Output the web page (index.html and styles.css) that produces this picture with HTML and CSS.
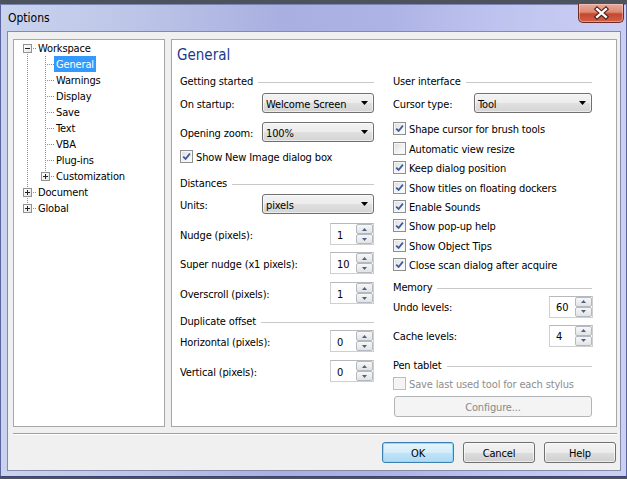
FILE: index.html
```html
<!DOCTYPE html>
<html>
<head>
<meta charset="utf-8">
<title>Options</title>
<link rel="stylesheet" href="styles.css">
</head>
<body>
<div class="window">
  <div class="titlebar">
    <span class="title">Options</span>
    <div class="close">
      <svg width="46" height="19" viewBox="0 0 46 19">
        <path d="M19.5 5 L28.5 13 M28.5 5 L19.5 13" stroke="#4a1a10" stroke-width="4.6" stroke-linecap="square" fill="none"/>
        <path d="M19.5 5 L28.5 13 M28.5 5 L19.5 13" stroke="#ffffff" stroke-width="2.4" stroke-linecap="square" fill="none"/>
      </svg>
    </div>
  </div>
  <div class="client">
    <div class="panes">
      <div class="tree">
        <div class="trow"><span class="c c-bottom-h"><i class="tbox"></i></span><span class="lbl">Workspace</span></div>
        <div class="trow"><span class="c c-full"></span><span class="c c-full-h"></span><span class="lbl sel">General</span></div>
        <div class="trow"><span class="c c-full"></span><span class="c c-full-h"></span><span class="lbl">Warnings</span></div>
        <div class="trow"><span class="c c-full"></span><span class="c c-full-h"></span><span class="lbl">Display</span></div>
        <div class="trow"><span class="c c-full"></span><span class="c c-full-h"></span><span class="lbl">Save</span></div>
        <div class="trow"><span class="c c-full"></span><span class="c c-full-h"></span><span class="lbl">Text</span></div>
        <div class="trow"><span class="c c-full"></span><span class="c c-full-h"></span><span class="lbl">VBA</span></div>
        <div class="trow"><span class="c c-full"></span><span class="c c-full-h"></span><span class="lbl">Plug-ins</span></div>
        <div class="trow"><span class="c c-full"></span><span class="c c-top-h"><i class="tbox plus"></i></span><span class="lbl">Customization</span></div>
        <div class="trow"><span class="c c-full-h"><i class="tbox plus"></i></span><span class="lbl">Document</span></div>
        <div class="trow"><span class="c c-top-h"><i class="tbox plus"></i></span><span class="lbl">Global</span></div>
      </div>
      <div class="page">
        <div class="heading">General</div>
        <div class="cols">
          <div class="col col-left">
            <div class="gtitle">Getting started</div>
            <div class="frow h20 mt5"><span class="t">On startup:</span><div class="combo cw-l"><span class="t">Welcome Screen</span><svg class="dd" width="7" height="4" viewBox="0 0 7 4"><path d="M0 0H7L3.5 4Z" fill="#000"/></svg></div></div>
            <div class="frow h20 mt9"><span class="t">Opening zoom:</span><div class="combo cw-l"><span class="t">100%</span><svg class="dd" width="7" height="4" viewBox="0 0 7 4"><path d="M0 0H7L3.5 4Z" fill="#000"/></svg></div></div>
            <label class="chk h16 mt6"><span class="cbox"><svg width="9" height="9" viewBox="0 0 9 9"><path d="M1.2 4.6 L3.6 7 L7.9 1.6" stroke="#3f5b96" stroke-width="1.8" fill="none"/></svg></span><span class="t">Show New Image dialog box</span></label>

            <div class="gtitle mt12">Distances</div>
            <div class="frow h20 mt4"><span class="t">Units:</span><div class="combo cw-l"><span class="t">pixels</span><svg class="dd" width="7" height="4" viewBox="0 0 7 4"><path d="M0 0H7L3.5 4Z" fill="#000"/></svg></div></div>
            <div class="frow h22 mt9"><span class="t">Nudge (pixels):</span><div class="spin"><span class="val">1</span><div class="arrows"><div class="sb"><svg width="5" height="3" viewBox="0 0 5 3"><path d="M0 3L2.5 0L5 3Z" fill="#4d6185"/></svg></div><div class="sb"><svg width="5" height="3" viewBox="0 0 5 3"><path d="M0 0L2.5 3L5 0Z" fill="#4d6185"/></svg></div></div></div></div>
            <div class="frow h22 mt7"><span class="t">Super nudge (x1 pixels):</span><div class="spin"><span class="val">10</span><div class="arrows"><div class="sb"><svg width="5" height="3" viewBox="0 0 5 3"><path d="M0 3L2.5 0L5 3Z" fill="#4d6185"/></svg></div><div class="sb"><svg width="5" height="3" viewBox="0 0 5 3"><path d="M0 0L2.5 3L5 0Z" fill="#4d6185"/></svg></div></div></div></div>
            <div class="frow h22 mt8"><span class="t">Overscroll (pixels):</span><div class="spin"><span class="val">1</span><div class="arrows"><div class="sb"><svg width="5" height="3" viewBox="0 0 5 3"><path d="M0 3L2.5 0L5 3Z" fill="#4d6185"/></svg></div><div class="sb"><svg width="5" height="3" viewBox="0 0 5 3"><path d="M0 0L2.5 3L5 0Z" fill="#4d6185"/></svg></div></div></div></div>

            <div class="gtitle mt10">Duplicate offset</div>
            <div class="frow h22 mt2"><span class="t">Horizontal (pixels):</span><div class="spin"><span class="val">0</span><div class="arrows"><div class="sb"><svg width="5" height="3" viewBox="0 0 5 3"><path d="M0 3L2.5 0L5 3Z" fill="#4d6185"/></svg></div><div class="sb"><svg width="5" height="3" viewBox="0 0 5 3"><path d="M0 0L2.5 3L5 0Z" fill="#4d6185"/></svg></div></div></div></div>
            <div class="frow h22 mt8"><span class="t">Vertical (pixels):</span><div class="spin"><span class="val">0</span><div class="arrows"><div class="sb"><svg width="5" height="3" viewBox="0 0 5 3"><path d="M0 3L2.5 0L5 3Z" fill="#4d6185"/></svg></div><div class="sb"><svg width="5" height="3" viewBox="0 0 5 3"><path d="M0 0L2.5 3L5 0Z" fill="#4d6185"/></svg></div></div></div></div>
          </div>

          <div class="col col-right">
            <div class="gtitle">User interface</div>
            <div class="frow h20 mt5"><span class="t">Cursor type:</span><div class="combo cw-r"><span class="t">Tool</span><svg class="dd" width="7" height="4" viewBox="0 0 7 4"><path d="M0 0H7L3.5 4Z" fill="#000"/></svg></div></div>
            <div class="chklist">
              <label class="chk"><span class="cbox"><svg width="9" height="9" viewBox="0 0 9 9"><path d="M1.2 4.6 L3.6 7 L7.9 1.6" stroke="#3f5b96" stroke-width="1.8" fill="none"/></svg></span><span class="t">Shape cursor for brush tools</span></label>
              <label class="chk"><span class="cbox"></span><span class="t">Automatic view resize</span></label>
              <label class="chk"><span class="cbox"><svg width="9" height="9" viewBox="0 0 9 9"><path d="M1.2 4.6 L3.6 7 L7.9 1.6" stroke="#3f5b96" stroke-width="1.8" fill="none"/></svg></span><span class="t">Keep dialog position</span></label>
              <label class="chk"><span class="cbox"><svg width="9" height="9" viewBox="0 0 9 9"><path d="M1.2 4.6 L3.6 7 L7.9 1.6" stroke="#3f5b96" stroke-width="1.8" fill="none"/></svg></span><span class="t">Show titles on floating dockers</span></label>
              <label class="chk"><span class="cbox"><svg width="9" height="9" viewBox="0 0 9 9"><path d="M1.2 4.6 L3.6 7 L7.9 1.6" stroke="#3f5b96" stroke-width="1.8" fill="none"/></svg></span><span class="t">Enable Sounds</span></label>
              <label class="chk"><span class="cbox"><svg width="9" height="9" viewBox="0 0 9 9"><path d="M1.2 4.6 L3.6 7 L7.9 1.6" stroke="#3f5b96" stroke-width="1.8" fill="none"/></svg></span><span class="t">Show pop-up help</span></label>
              <label class="chk"><span class="cbox"><svg width="9" height="9" viewBox="0 0 9 9"><path d="M1.2 4.6 L3.6 7 L7.9 1.6" stroke="#3f5b96" stroke-width="1.8" fill="none"/></svg></span><span class="t">Show Object Tips</span></label>
              <label class="chk"><span class="cbox"><svg width="9" height="9" viewBox="0 0 9 9"><path d="M1.2 4.6 L3.6 7 L7.9 1.6" stroke="#3f5b96" stroke-width="1.8" fill="none"/></svg></span><span class="t">Close scan dialog after acquire</span></label>
            </div>

            <div class="gtitle mt6">Memory</div>
            <div class="frow h22 mt1"><span class="t">Undo levels:</span><div class="spin"><span class="val">60</span><div class="arrows"><div class="sb"><svg width="5" height="3" viewBox="0 0 5 3"><path d="M0 3L2.5 0L5 3Z" fill="#4d6185"/></svg></div><div class="sb"><svg width="5" height="3" viewBox="0 0 5 3"><path d="M0 0L2.5 3L5 0Z" fill="#4d6185"/></svg></div></div></div></div>
            <div class="frow h22 mt7"><span class="t">Cache levels:</span><div class="spin"><span class="val">4</span><div class="arrows"><div class="sb"><svg width="5" height="3" viewBox="0 0 5 3"><path d="M0 3L2.5 0L5 3Z" fill="#4d6185"/></svg></div><div class="sb"><svg width="5" height="3" viewBox="0 0 5 3"><path d="M0 0L2.5 3L5 0Z" fill="#4d6185"/></svg></div></div></div></div>

            <div class="gtitle mt11">Pen tablet</div>
            <label class="chk h16 mt4 disabled"><span class="cbox"></span><span class="t">Save last used tool for each stylus</span></label>
            <div class="btn-config">Configure...</div>
          </div>
        </div>
      </div>
    </div>
    <div class="sep"></div>
    <div class="buttons">
      <div class="btn btn-default">OK</div>
      <div class="btn">Cancel</div>
      <div class="btn">Help</div>
    </div>
  </div>
</div>
</body>
</html>
```

FILE: styles.css
```css
html, body {
  margin: 0;
  padding: 0;
}
body {
  width: 627px;
  height: 479px;
  overflow: hidden;
  background: #4d535c;
  font-family: "DejaVu Sans Condensed", "DejaVu Sans", sans-serif;
  font-size: 11px;
  letter-spacing: -0.15px;
  color: #000;
}

/* window frame */
.window {
  margin-top: 4px;
  width: 627px;
  height: 473px;
  box-sizing: border-box;
  border: 1px solid #5c64a0;
  border-top-color: #7c84b6;
  border-bottom-color: #3c4270;
  background: linear-gradient(90deg, #c9d3ee 0%, #bcc5e7 22%, #a9afe0 45%, #aeb3e6 62%, #c0c5f0 82%, #cbcff4 100%);
  display: flex;
  flex-direction: column;
}
.titlebar {
  height: 26px;
  flex: none;
  display: flex;
  justify-content: space-between;
  align-items: flex-start;
  padding: 0 2px 0 7px;
}
.title {
  font-size: 12px;
  letter-spacing: 0;
  line-height: 24px;
  padding-top: 1px;
  color: #000;
}
.close {
  width: 46px;
  height: 19px;
  margin-top: -1px;
  box-sizing: border-box;
  border: 1px solid #6e2a20;
  border-top: none;
  border-radius: 0 0 5px 5px;
  background: linear-gradient(#e9a99b 0%, #dd8a76 45%, #c7462f 55%, #d0614a 100%);
  box-shadow: inset 0 0 0 1px rgba(255, 220, 210, 0.45);
  display: flex;
}
.close svg {
  margin-left: -1px;
}

/* client area */
.client {
  margin: 0 6px;
  width: 614px;
  height: 440px;
  box-sizing: border-box;
  border: 1px solid #858aa8;
  background: #f0f0f0;
  display: flex;
  flex-direction: column;
  padding: 7px 3px 0 5px;
}
.panes {
  display: flex;
  gap: 6px;
  height: 388px;
}

/* tree */
.tree {
  width: 152px;
  box-sizing: border-box;
  border: 1px solid #a8a8a8;
  background: #fff;
  padding: 0 0 0 4px;
}
.trow {
  height: 16px;
  display: flex;
  align-items: flex-start;
}
.c {
  flex: none;
  width: 18px;
  height: 16px;
  display: flex;
  align-items: flex-start;
  background-repeat: no-repeat;
}
.c-full {
  background-image: repeating-linear-gradient(to bottom, #8f8f8f 0 1px, transparent 1px 2px);
  background-position: 9px 0;
  background-size: 1px 16px;
}
.c-full-h {
  background-image: repeating-linear-gradient(to bottom, #8f8f8f 0 1px, transparent 1px 2px), repeating-linear-gradient(to right, #8f8f8f 0 1px, transparent 1px 2px);
  background-position: 9px 0, 11px 8px;
  background-size: 1px 16px, 7px 1px;
}
.c-top-h {
  background-image: repeating-linear-gradient(to bottom, #8f8f8f 0 1px, transparent 1px 2px), repeating-linear-gradient(to right, #8f8f8f 0 1px, transparent 1px 2px);
  background-position: 9px 0, 11px 8px;
  background-size: 1px 8px, 7px 1px;
}
.c-bottom-h {
  background-image: repeating-linear-gradient(to bottom, #8f8f8f 0 1px, transparent 1px 2px), repeating-linear-gradient(to right, #8f8f8f 0 1px, transparent 1px 2px);
  background-position: 9px 8px, 11px 8px;
  background-size: 1px 8px, 7px 1px;
}
.tbox {
  display: block;
  width: 9px;
  height: 9px;
  box-sizing: border-box;
  margin: 4px 0 0 5px;
  border: 1px solid #919191;
  background: linear-gradient(#222, #222) center / 5px 1px no-repeat, linear-gradient(135deg, #ffffff, #e6e6e6);
}
.tbox.plus {
  background: linear-gradient(#222, #222) center / 5px 1px no-repeat, linear-gradient(#222, #222) center / 1px 5px no-repeat, linear-gradient(135deg, #ffffff, #e6e6e6);
}
.lbl {
  box-sizing: border-box;
  height: 16px;
  padding: 2px 2px 0;
  line-height: 14px;
  white-space: nowrap;
}
.lbl.sel {
  background: #3399ff;
  color: #fff;
}

/* page */
.page {
  width: 446px;
  box-sizing: border-box;
  border: 1px solid #a8a8a8;
  background: #fff;
  padding: 5px 0 0 8px;
}
.heading {
  margin-left: -3px;
  font-size: 15px;
  letter-spacing: 0;
  line-height: 20px;
  height: 20px;
  color: #1c3a8c;
}
.cols {
  margin-top: 9px;
  display: flex;
  gap: 19px;
}
.col-left {
  width: 194px;
}
.col-right {
  width: 200px;
}
.col {
  display: flex;
  flex-direction: column;
}
.t {
  padding-top: 2px;
}
.gtitle {
  box-sizing: border-box;
  height: 14px;
  padding-top: 2px;
  line-height: 12px;
  display: flex;
  align-items: center;
  gap: 5px;
  white-space: nowrap;
}
.gtitle::after {
  content: "";
  flex: 1;
  height: 0;
  border-top: 1px solid #c9c9c9;
  margin-top: 1px;
}
.col-right .gtitle {
  margin-right: 1px;
}
.frow {
  display: flex;
  align-items: center;
  justify-content: space-between;
  white-space: nowrap;
}
.h16 { height: 16px; }
.h20 { height: 20px; }
.h22 { height: 22px; }
.mt1 { margin-top: 1.5px; }
.mt2 { margin-top: 2px; }
.mt4 { margin-top: 4px; }
.mt5 { margin-top: 5px; }
.mt6 { margin-top: 6px; }
.mt7 { margin-top: 7px; }
.mt8 { margin-top: 8px; }
.mt9 { margin-top: 9px; }
.mt10 { margin-top: 10px; }
.mt11 { margin-top: 11px; }
.mt12 { margin-top: 12px; }

/* combo box */
.combo {
  box-sizing: border-box;
  height: 20px;
  border: 1px solid #707070;
  border-radius: 3px;
  background: linear-gradient(#f3f3f3 0%, #ececec 50%, #e0e0e0 50%, #d4d4d4 100%);
  box-shadow: inset 0 0 0 1px rgba(255, 255, 255, 0.55);
  display: flex;
  align-items: center;
  justify-content: space-between;
  padding: 0 5px 0 3px;
}
.cw-l { width: 112px; }
.cw-r { width: 118px; margin-right: 1px; }

/* spinner */
.spin {
  width: 44px;
  height: 22px;
  box-sizing: border-box;
  border: 1px solid #cfcfcf;
  border-top-color: #b5b8bd;
  background: #fff;
  display: flex;
  align-items: stretch;
}
.val {
  flex: 1;
  padding: 2px 0 0 6px;
  display: flex;
  align-items: center;
}
.arrows {
  width: 17px;
  display: flex;
  flex-direction: column;
}
.sb {
  flex: 1;
  box-sizing: border-box;
  border: 1px solid #b4b9c0;
  border-radius: 2px;
  background: linear-gradient(#f7f7f7, #e2e3e5);
  display: flex;
  align-items: center;
  justify-content: center;
}

/* checkbox */
.chk {
  display: flex;
  align-items: center;
  white-space: nowrap;
}
.chklist {
  margin-top: 6.3px;
  display: flex;
  flex-direction: column;
}
.chklist .chk {
  height: 19.4px;
}
.cbox {
  flex: none;
  width: 13px;
  height: 13px;
  box-sizing: border-box;
  margin-right: 3px;
  border: 1px solid #8e8f8f;
  background: linear-gradient(135deg, #d9dce0 0%, #f4f4f4 60%, #fdfdfd 100%);
  box-shadow: inset 0 0 0 1px #f6f6f6;
  display: flex;
  align-items: center;
  justify-content: center;
}
.chk.disabled {
  color: #8d8d8d;
}
.chk.disabled .cbox {
  border-color: #bcbcbc;
  background: #f4f4f4;
}
.btn-config {
  margin: 4px 0 0 1px;
  width: 198px;
  height: 21px;
  box-sizing: border-box;
  padding-top: 2px;
  border: 1px solid #b2b5b8;
  border-radius: 3px;
  background: #f4f4f4;
  color: #8a8a8a;
  display: flex;
  align-items: center;
  justify-content: center;
}

/* bottom */
.sep {
  margin-top: 6px;
  height: 0;
  border-top: 1px solid #a0a0a0;
  border-bottom: 1px solid #ffffff;
}
.buttons {
  margin-top: 7px;
  display: flex;
  justify-content: flex-end;
  gap: 9px;
  padding-right: 1px;
}
.btn {
  width: 72px;
  height: 21px;
  box-sizing: border-box;
  padding-top: 2px;
  border: 1px solid #707070;
  border-radius: 3px;
  background: linear-gradient(#f3f3f3 0%, #ebebeb 50%, #dddddd 50%, #cfcfcf 100%);
  box-shadow: inset 0 0 0 1px rgba(255, 255, 255, 0.6);
  display: flex;
  align-items: center;
  justify-content: center;
}
.btn-default {
  border-color: #3c7fb1;
  background: linear-gradient(#e6f4fc 0%, #d5edfa 50%, #c0e4f8 50%, #aedaf2 100%);
  box-shadow: inset 0 0 0 1px #8fdcf7;
}
```
